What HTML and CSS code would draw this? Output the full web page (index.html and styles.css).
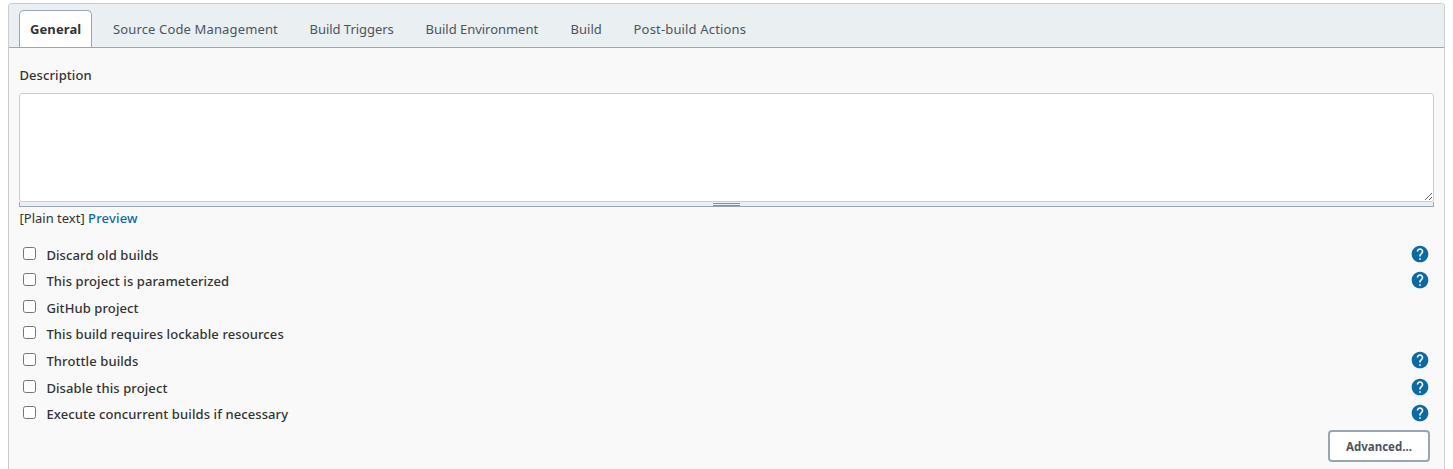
FILE: index.html
```
<!DOCTYPE html>
<html lang="en">
<head>
<meta charset="utf-8">
<title>Project configuration</title>
<link rel="stylesheet" href="styles.css">
</head>
<body>
<svg class="defs" width="0" height="0">
  <symbol id="help" viewBox="0 0 24 24"><path fill="currentColor" d="M12 2C6.48 2 2 6.48 2 12s4.48 10 10 10 10-4.48 10-10S17.52 2 12 2zm1 17h-2v-2h2v2zm2.07-7.75l-.9.92C13.45 12.9 13 13.5 13 15h-2v-.5c0-1.1.45-2.1 1.17-2.83l1.24-1.26c.37-.36.59-.86.59-1.41 0-1.1-.9-2-2-2s-2 .9-2 2H8c0-2.21 1.79-4 4-4s4 1.79 4 4c0 .88-.36 1.68-.93 2.25z"/></symbol>
</svg>
<main class="config">
  <nav class="tabs">
    <a class="tab active">General</a>
    <a class="tab scm">Source Code Management</a>
    <a class="tab triggers">Build Triggers</a>
    <a class="tab environment">Build Environment</a>
    <a class="tab build">Build</a>
    <a class="tab post">Post-build Actions</a>
  </nav>
  <form class="form">
    <label class="heading" for="description">Description</label>
    <textarea id="description" class="description"></textarea>
    <div class="handle"><span class="grip"></span></div>
    <div class="format">[Plain text] <a class="preview">Preview</a></div>
    <div class="options">
      <div class="option"><input type="checkbox" id="o1"><label for="o1">Discard old builds</label><svg class="help"><use href="#help"/></svg></div>
      <div class="option"><input type="checkbox" id="o2"><label for="o2">This project is parameterized</label><svg class="help"><use href="#help"/></svg></div>
      <div class="option"><input type="checkbox" id="o3"><label for="o3">GitHub project</label></div>
      <div class="option"><input type="checkbox" id="o4"><label for="o4">This build requires lockable resources</label></div>
      <div class="option"><input type="checkbox" id="o5"><label for="o5">Throttle builds</label><svg class="help"><use href="#help"/></svg></div>
      <div class="option"><input type="checkbox" id="o6"><label for="o6">Disable this project</label><svg class="help"><use href="#help"/></svg></div>
      <div class="option"><input type="checkbox" id="o7"><label for="o7">Execute concurrent builds if necessary</label><svg class="help"><use href="#help"/></svg></div>
    </div>
    <button type="button" class="advanced">Advanced...</button>
  </form>
</main>
</body>
</html>
```
FILE: styles.css
```
* { box-sizing: border-box; }
html, body { height: 100%; overflow: hidden; }
body {
  margin: 0;
  padding: 3px 8px 0;
  background: #fff;
  color: #333;
  font: 13px/20px "Noto Sans", "Open Sans", sans-serif;
}
.defs { display: block; }
.config {
  height: 100%;
  border: 1px solid #ccc;
  border-bottom: 0;
  border-radius: 4px 4px 0 0;
  background: #f9f9f9;
  overflow: hidden;
}
.tabs {
  display: flex;
  height: 44px;
  padding: 6px 0 0 10px;
  background: #eaeff2;
  border-bottom: 1px solid #98a6b1;
}
.tab {
  padding: 9px 0 0 16px;
  white-space: nowrap;
  color: #4d545d;
}
.tab.active {
  width: 73px;
  height: 37px;
  margin-right: 5px;
  padding: 8px 0 0 10px;
  border: 1px solid #98a6b1;
  border-bottom: 0;
  border-radius: 5px 5px 0 0;
  background: #fff;
  color: #333;
  font-weight: 700;
  letter-spacing: 0.1px;
}
.scm { width: 196.6px; letter-spacing: 0.14px; }
.triggers { width: 116px; letter-spacing: -0.05px; }
.environment { width: 145px; letter-spacing: -0.03px; }
.build { width: 63px; }
.post { letter-spacing: 0.16px; }
.form {
  display: flex;
  flex-direction: column;
  padding: 17px 10px 0;
}
.heading {
  height: 28px;
  padding-left: 0.5px;
  font-weight: 500;
  letter-spacing: 0.08px;
}
.description {
  display: block;
  width: 100%;
  height: 109px;
  margin: 0;
  border: 1px solid #ccc;
  border-radius: 3px;
  background: #fff;
  resize: vertical;
}
.handle {
  display: flex;
  justify-content: center;
  height: 5px;
  border: 1px solid #98a6b1;
  border-top: 0;
  background: #eaeff2;
}
.grip {
  width: 27px;
  height: 3px;
  margin-top: 1px;
  border: solid #899090;
  border-width: 1px 0;
}
.format { height: 34.55px; padding: 1px 0 0 0.5px; }
.preview { color: #0b6aa2; font-weight: 500; letter-spacing: 0.18px; }
.options { display: grid; grid-auto-rows: 26.6px; }
.option { display: flex; align-items: flex-start; }
.option input { width: 13px; height: 13px; margin: 5px 10.4px 0 4px; }
.option label { padding-top: 3px; font-weight: 500; letter-spacing: 0.1px; }
.help { width: 20px; height: 20px; margin: 2px 4px 0 auto; color: #0b6aa2; }
.advanced {
  align-self: flex-end;
  width: 102px;
  height: 32px;
  margin: 2.25px 4px 0 0;
  padding: 2px 0 0;
  border: 2px solid #98a6b1;
  border-radius: 4px;
  background: #fff;
  color: #4d545d;
  font: 700 11.5px/20px "Noto Sans", "Open Sans", sans-serif;
}
```
